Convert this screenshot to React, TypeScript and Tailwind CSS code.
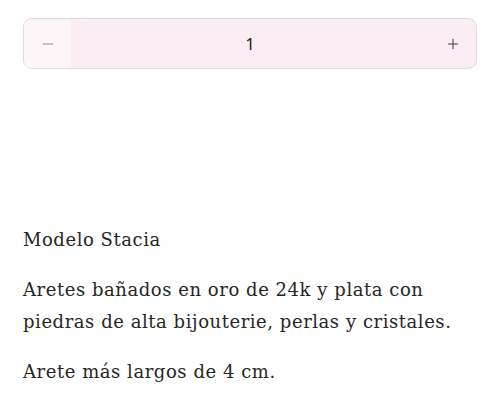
import { Minus, Plus } from "lucide-react";

export default function App() {
  return (
    <div className="h-[402px] w-[500px] bg-white px-[23px] pt-[18px] text-[#262626]" style={{ fontFamily: '"DejaVu Serif", serif' }}>
      {/* Quantity stepper */}
      <div className="flex h-[51px] overflow-hidden rounded-[9px] border border-[#ead6e1] bg-[#faeef4]">
        <button className="flex w-[47px] items-center justify-center bg-[#fdf6f9] text-[#777]">
          <Minus className="h-4 w-4" strokeWidth={1.2} />
        </button>
        <div className="flex flex-1 items-center justify-center text-[17px] text-[#222]" style={{ fontFamily: '"Noto Sans", sans-serif' }}>
          1
        </div>
        <button className="flex w-[47px] items-center justify-center text-[#333]">
          <Plus className="h-4 w-4" strokeWidth={1.4} />
        </button>
      </div>

      {/* Description */}
      <div className="mt-[155px] text-[18px] leading-[32px] tracking-[0.55px]">
        <p>Modelo Stacia</p>
        <p className="mt-[18px]">Aretes bañados en oro de 24k y plata con piedras de alta bijouterie, perlas y cristales.</p>
        <p className="mt-[18px]">Arete más largos de 4 cm.</p>
      </div>
    </div>
  );
}
